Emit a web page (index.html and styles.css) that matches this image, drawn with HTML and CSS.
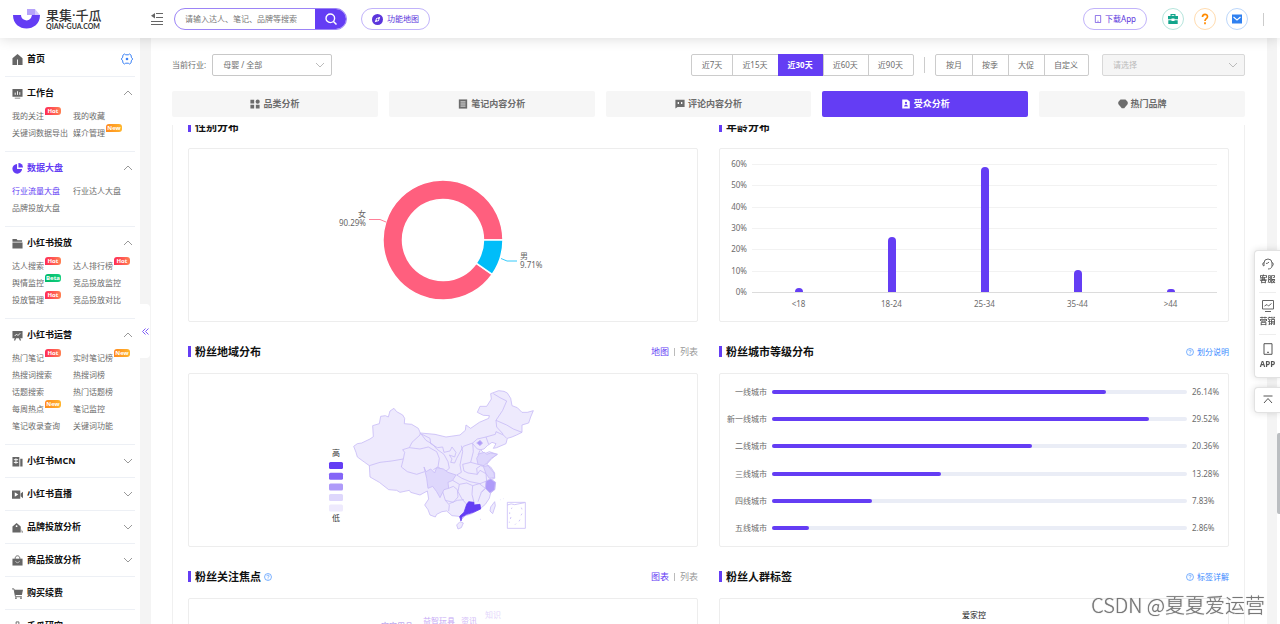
FILE: index.html
```html
<!DOCTYPE html>
<html lang="zh-CN">
<head>
<meta charset="utf-8">
<meta name="viewport" content="width=device-width, initial-scale=1">
<title>果集·千瓜</title>
<link rel="stylesheet" href="styles.css">
</head>
<body>
<svg class="sprite" aria-hidden="true">
  <symbol id="up" viewBox="0 0 10 10"><path d="M1 7l4-4 4 4" fill="none" stroke="currentColor"/></symbol>
  <symbol id="down" viewBox="0 0 10 10"><path d="M1 3l4 4 4-4" fill="none" stroke="currentColor"/></symbol>
  <symbol id="help" viewBox="0 0 12 12"><g fill="none" stroke="currentColor"><circle cx="6" cy="6" r="5.2"/><path d="M4.3 4.8C4.3 2.6 7.7 2.6 7.7 4.7 7.7 5.900 6 5.900 6 7.200M6 8.300v1.100"/></g></symbol>
  <symbol id="phone" viewBox="0 0 12 12"><path d="M2 .7h8v10.600h-8zM5 9.300h2" fill="none" stroke="currentColor"/></symbol>
</svg>

<header class="header">
  <a class="logo" href="#">
    <svg width="29" height="22" viewBox="0 0 29 22"><path d="M1 7h8a5.500 5.500 0 0 0 10 3l1-3h8C28 25 1 25 1 7z" fill="#643df4"/><path d="M15 1h8v6h-8z" fill="#b5a2fa"/><path d="M23 1l5 6h-5z" fill="#d3c8fc"/></svg>
    <span class="logo-text"><b class="logo-name">果集·千瓜</b><span class="logo-site">QIAN-GUA.COM</span></span>
  </a>
  <button class="fold" aria-label="收起菜单"><svg width="12" height="12" viewBox="0 0 12 12"><path d="M5 .5h7M5 4.500h7M0 8.500h12M0 11.500h12" stroke="#666" fill="none"/><path d="M4 0v5.500L0 2.700z" fill="#666"/></svg></button>
  <form class="search">
    <input class="search-input" aria-label="搜索" placeholder="请输入达人、笔记、品牌等搜索">
    <button class="search-btn" type="button" aria-label="搜索"><svg width="12" height="12" viewBox="0 0 12 12"><circle cx="5.300" cy="5.300" r="4.300" fill="none" stroke="#fff" stroke-width="1.400"/><path d="M8.500 8.500l3 3" stroke="#fff" stroke-width="1.500"/></svg></button>
  </form>
  <button class="pill map-btn"><svg width="11" height="11" viewBox="0 0 12 12"><circle cx="6" cy="6" r="6" fill="#5b35dc"/><path d="M9 3L7.500 7.500 3 9l1.500-4.500z" fill="#fff"/><circle cx="6" cy="6" r="1" fill="#5b35dc"/></svg>功能地图</button>
  <div class="header-right">
    <button class="pill app-btn"><svg width="8" height="8"><use href="#phone"/></svg>下载App</button>
    <button class="round green" aria-label="工具箱"><svg width="12" height="12" viewBox="0 0 12 12"><path d="M1 3h2.500V1h5v2H11v3.200H7.500V5.500h-3v.7H1zM1.300 7.200h3.200V8h3v-.8h3.200V11H1.300z" fill="#12a58c"/><path d="M4.700 2.200h2.600V3H4.700z" fill="#fff"/></svg></button>
    <button class="round orange" aria-label="帮助"><svg width="12" height="12" viewBox="0 0 12 12"><path d="M3.500 4C3.500.5 8.500.5 8.500 3.700 8.500 5.700 6 5.800 6 8M6 9.300v2" fill="none" stroke="#ff8a00" stroke-width="1.700"/></svg></button>
    <button class="round blue" aria-label="消息"><svg width="12" height="12" viewBox="0 0 12 12"><path d="M1 1.500h10v9H1z" fill="#2f80f0"/><path d="M2.500 4L6 7l3.500-3" fill="none" stroke="#fff" stroke-width="1.100"/></svg></button>
    <i class="header-line"></i>
  </div>
</header>

<div class="body">
  <nav class="sidebar">
    <section class="group home">
      <a class="head" href="#"><svg class="ico" viewBox="0 0 12 12"><path d="M6 0l5.500 4.500V12H.5V4.500z" fill="#666"/><path d="M6 6v6" stroke="#fff"/></svg>首页<svg class="gear" viewBox="0 0 12 12"><path d="M3.500 1l1.200.8h2.600L8.500 1l1.600 1.200.2 2L11.700 6l-1.400 1.800-.2 2L8.500 11l-1.200-.8H4.700L3.500 11 1.900 9.800l-.2-2L.3 6l1.400-1.800.2-2z" fill="none" stroke="#3b82f6"/><circle cx="6" cy="6" r="1.300" fill="#3b82f6"/></svg></a>
    </section>
    <section class="group">
      <a class="head" href="#"><svg class="ico" viewBox="0 0 12 12"><path d="M.5 1h11v8.500H.5zM3 10.500h6v1H3z" fill="#666"/><path d="M3.500 7.500V5M6 7.500v-4M8.500 7.500v-3" stroke="#fff"/></svg>工作台<svg class="arrow"><use href="#up"/></svg></a>
      <div class="subs"><a href="#">我的关注<em class="tag hot">Hot</em></a><a href="#">我的收藏</a><a href="#">关键词数据导出</a><a href="#">媒介管理<em class="tag new">New</em></a></div>
    </section>
    <section class="group active">
      <a class="head" href="#"><svg class="ico" viewBox="0 0 12 12"><path d="M5.500 1v5.500H11A5.300 5.300 0 1 1 5.500 1z" fill="#643df4"/><path d="M7 0a5 5 0 0 1 5 5H7z" fill="#643df4"/></svg>数据大盘<svg class="arrow"><use href="#up"/></svg></a>
      <div class="subs"><a class="current" href="#">行业流量大盘</a><a href="#">行业达人大盘</a><a href="#">品牌投放大盘</a></div>
    </section>
    <section class="group">
      <a class="head" href="#"><svg class="ico" viewBox="0 0 12 12"><path d="M.5 1H5l1 1.500h5V4H.5zM.5 5h11v6.500H.5z" fill="#666"/></svg>小红书投放<svg class="arrow"><use href="#up"/></svg></a>
      <div class="subs"><a href="#">达人搜索<em class="tag hot">Hot</em></a><a href="#">达人排行榜<em class="tag hot">Hot</em></a><a href="#">舆情监控<em class="tag beta">Beta</em></a><a href="#">竞品投放监控</a><a href="#">投放管理<em class="tag hot">Hot</em></a><a href="#">竞品投放对比</a></div>
    </section>
    <section class="group">
      <a class="head" href="#"><svg class="ico" viewBox="0 0 12 12"><path d="M.5 1h11v8H.5zM3 9h1.500L3.500 11.500H2zM7.500 9H9l1 2.500H8.500z" fill="#666"/><path d="M3 6.500l2-2 1.500 1.500L9 3.500" stroke="#fff" fill="none"/></svg>小红书运营<svg class="arrow"><use href="#up"/></svg></a>
      <div class="subs"><a href="#">热门笔记<em class="tag hot">Hot</em></a><a href="#">实时笔记榜<em class="tag new">New</em></a><a href="#">热搜词搜索</a><a href="#">热搜词榜</a><a href="#">话题搜索</a><a href="#">热门话题榜</a><a href="#">每周热点<em class="tag new">New</em></a><a href="#">笔记监控</a><a href="#">笔记收录查询</a><a href="#">关键词功能</a></div>
    </section>
    <section class="group"><a class="head" href="#"><svg class="ico" viewBox="0 0 12 12"><path d="M.5 1H8v10.500H.5zM9 3h2.500v8.500H9z" fill="#666"/><path d="M2 4h4.700M2 7h4.700M4.300 2.500v6" stroke="#fff"/></svg>小红书MCN<svg class="arrow"><use href="#down"/></svg></a></section>
    <section class="group"><a class="head" href="#"><svg class="ico" viewBox="0 0 12 12"><path d="M0 1.500h9v9H0zM9.500 5l2.500-2v7L9.500 8z" fill="#666"/><path d="M3 3.500L6.800 6 3 8.500z" fill="#fff"/></svg>小红书直播<svg class="arrow"><use href="#down"/></svg></a></section>
    <section class="group"><a class="head" href="#"><svg class="ico" viewBox="0 0 12 12"><path d="M.5 5L5 1l4.500 4v6.500h-9zM10.500 8l1.500 3.500h-1.500z" fill="#666"/><circle cx="5" cy="4.500" r="1" fill="#fff"/></svg>品牌投放分析<svg class="arrow"><use href="#down"/></svg></a></section>
    <section class="group"><a class="head" href="#"><svg class="ico" viewBox="0 0 12 12"><path d="M.5 4h11v7.500H.5z" fill="#666"/><path d="M3.500 5V3.500C3.500 0 8.500 0 8.500 3.500V5" fill="none" stroke="#666"/><path d="M4 6.500C4 9 8 9 8 6.500" fill="none" stroke="#fff" stroke-width=".6"/></svg>商品投放分析<svg class="arrow"><use href="#down"/></svg></a></section>
    <section class="group"><a class="head" href="#"><svg class="ico" viewBox="0 0 12 12"><path d="M2.500 2H12l-1.200 5.500H3.500z" fill="#666"/><path d="M0 1h2.200l1.600 8.500h7" fill="none" stroke="#666"/><circle cx="4.300" cy="11" r="1" fill="#666"/><circle cx="9.800" cy="11" r="1" fill="#666"/></svg>购买续费</a></section>
    <section class="group"><a class="head" href="#"><svg class="ico" viewBox="0 0 12 12"><path d="M4.500 1h3v4l3 6h-9l3-6z" fill="none" stroke="#666"/></svg>千瓜研究</a></section>
  </nav>
  <div class="gutter"><button class="collapse" aria-label="收起侧栏"><svg width="7" height="7" viewBox="0 0 7 7"><path d="M3.500.5l-3 3 3 3M6.500.5l-3 3 3 3" fill="none" stroke="#7d5cf6"/></svg></button></div>

  <main class="main">
    <div class="toolbar">
      <label class="label" for="industry">当前行业:</label>
      <span class="select industry"><select id="industry"><option>母婴 / 全部</option></select><svg class="arrow"><use href="#down"/></svg></span>
      <div class="btns push"><button>近7天</button><button>近15天</button><button class="on">近30天</button><button>近60天</button><button>近90天</button></div>
      <i class="split"></i>
      <div class="btns"><button>按月</button><button>按季</button><button>大促</button><button>自定义</button></div>
      <span class="select period"><select aria-label="周期" disabled><option>请选择</option></select><svg class="arrow"><use href="#down"/></svg></span>
    </div>
    <div class="tabs">
      <button class="tab"><svg viewBox="0 0 12 12"><path d="M.5 1H5v4.500H.5zM.5 7H5v4.500H.5zM7 7h4.500v4.500H7z" fill="currentColor"/><circle cx="9.200" cy="3.200" r="2.500" fill="currentColor"/></svg>品类分析</button>
      <button class="tab"><svg viewBox="0 0 12 12"><path d="M1 .5h10v11H1z" fill="currentColor"/><path d="M3 3.500h6M3 6h6M3 8.500h6" stroke="#fff"/></svg>笔记内容分析</button>
      <button class="tab"><svg viewBox="0 0 12 12"><path d="M.5 1h11v8.500H3L.5 11.500z" fill="currentColor"/><path d="M4 3.500v2.500M8 3.500v2.500" stroke="#fff" stroke-width="1.500"/></svg>评论内容分析</button>
      <button class="tab on"><svg viewBox="0 0 12 12"><path d="M1.500.5h6L10.500 3v8.500h-9z" fill="currentColor"/><circle cx="6" cy="4.700" r="1.300" fill="#643df4"/><path d="M3.700 9C3.700 6 8.300 6 8.300 9z" fill="#643df4"/></svg>受众分析</button>
      <button class="tab"><svg viewBox="0 0 12 12"><path d="M3 .5h6L11.700 3.500v2.500L7.500 11h-3L.3 6V3.500z" fill="currentColor"/></svg>热门品牌</button>
    </div>

    <div class="viewport">
      <div class="panels">
        <section class="panel">
          <div class="panel-head"><h2>性别分布</h2></div>
          <div class="card center">
            <svg width="246" height="172" viewBox="0 0 246 172">
              <g stroke="#fff" stroke-width="1.500"><path d="M183 91A60 60 0 1 0 172.200 125.400L156.200 114.200A40.500 40.500 0 1 1 163.500 91z" fill="#ff5f7e"/><path d="M183 91A60 60 0 0 1 172.200 125.400L156.200 114.200A40.500 40.500 0 0 0 163.500 91z" fill="#00bdf9"/></g>
              <path d="M49 70.500h11l6 2.500" fill="none" stroke="#ff5f7e" stroke-width=".8"/><path d="M181 109.500l6 2.500h10" fill="none" stroke="#00bdf9" stroke-width=".8"/>
              <g class="axis"><text x="46" y="68" text-anchor="end">女</text><text x="46" y="77" text-anchor="end">90.29%</text><text x="200" y="110">男</text><text x="200" y="119">9.71%</text></g>
            </svg>
          </div>
        </section>
        <section class="panel">
          <div class="panel-head"><h2>年龄分布</h2></div>
          <div class="card age">
            <div class="y-axis"><span>60%</span><span>50%</span><span>40%</span><span>30%</span><span>20%</span><span>10%</span><span>0%</span></div>
            <div class="plot">
              <div class="grid"><i></i><i></i><i></i><i></i><i></i><i></i></div>
              <div class="bars"><i style="height:3%"></i><i style="height:43%"></i><i style="height:98%"></i><i style="height:17%"></i><i style="height:2%"></i></div>
              <div class="x-axis"><span>&lt;18</span><span>18-24</span><span>25-34</span><span>35-44</span><span>&gt;44</span></div>
            </div>
          </div>
        </section>
        <section class="panel">
          <div class="panel-head"><h2>粉丝地域分布</h2><div class="switch"><a class="on" href="#">地图</a><i></i><a href="#">列表</a></div></div>
          <div class="card center">
            <svg width="246" height="172" viewBox="0 0 246 172">
              <g class="axis dark"><text x="12" y="82">高</text><text x="12" y="147">低</text></g>
              <rect x="9" y="88" width="14" height="7" rx="1.500" fill="#643df4"/><rect x="9" y="98.700" width="14" height="7" rx="1.500" fill="#8465f7"/><rect x="9" y="109.400" width="14" height="7" rx="1.500" fill="#af9bf9"/><rect x="9" y="120" width="14" height="7" rx="1.500" fill="#ded7fc"/><rect x="9" y="130.600" width="14" height="7" rx="1.500" fill="#eeeafd"/>
              <g transform="translate(0 1) scale(.33333)" stroke="#c6baf6" stroke-width="2.400" stroke-linejoin="round" fill="none">
                <path fill="#eeeafd" d="M101 214L112 206 125 204 150 192 160 185 158 152 178 146 182 124 196 122 205 126 210 108 222 100 230 110 248 120 254 130 253 146 275 148 295 160 301 174 345 178 378 186 420 180 436 166 438 150 452 160 478 142 506 130 508 122 490 121 472 112 480 94 500 94 514 72 512 56 536 47 552 49 562 54 572 70 576 92 592 98 606 112 622 112 640 107 632 126 626 144 606 150 606 172 590 180 576 186 562 190 558 206 530 218 520 220 528 206 516 202 502 212 492 222 482 224 494 236 508 230 532 238 516 250 500 268 512 276 524 294 524 310 514 314 527 322 524 344 512 354 508 370 496 388 482 400 455 416 436 422 424 434 416 424 396 422 380 408 366 410 350 418 346 426 330 420 324 404 314 390 326 372 322 348 300 360 272 352 268 346 240 352 230 346 206 344 178 322 150 306 148 272 134 262 112 246 108 232z"/>
                <path d="M148 272L180 262 215 258 250 252 254 232 248 224 268 218 276 202 300 180 301 174M268 218L300 222 325 216 350 230 358 250 354 276 340 284M250 252L244 276 262 290 290 298 314 290M301 174L318 196 338 208 350 222 372 238 384 260 388 280 376 290 354 276M306 178L330 190 332 206 352 218 368 216 372 232 390 228 396 216 408 232 404 246 388 240 396 252 392 262 404 264 410 250 430 214 458 204 460 230 452 262 428 268M424 212L428 230 420 270 424 292 410 300M458 204L472 192 498 186 526 178 528 170 550 180 560 190M498 186L506 208M458 206L472 222 482 224M528 136L530 156 550 178M528 136L560 150 580 162 606 172M528 136L548 106 560 78 540 68 520 56M452 262L474 268M428 268L432 288 444 294 472 298 470 280 482 272 490 274M410 300L426 310 450 320 480 326 500 318 498 296 480 286 472 298M418 328L440 324 458 332 456 358 462 382M418 328L414 350 426 372 440 388M458 332L478 326 496 340 484 352 474 380M386 340L400 334 412 344 414 366 400 382 376 376 368 350M376 376L388 390 386 408M388 386L412 376 432 374M398 316L418 328M484 352L496 340 510 354M480 226L474 240"/>
                <path fill="#ded7fc" d="M312 276L318 290 332 282 344 294 350 278 370 282 384 292 408 300 398 316 384 322 386 340 372 344 360 368 350 350 338 334 324 340 320 310zM470 250L478 236 494 232 500 238 512 234 532 238 514 250 500 264 492 272 474 268zM490 274L504 272 522 294 524 308 508 310 498 296z"/>
                <path fill="#af9bf9" d="M498 318L512 312 526 322 524 344 510 354 496 340zM470 204L480 196 488 204 480 212z"/>
                <path fill="#643df4" stroke="#643df4" d="M440 388L446 380 462 382 462 390 480 388 482 402 460 412 440 418 426 426 423 438 419 424 432 412z"/>
                <path fill="#eeeafd" d="M410 450L420 440 430 444 424 458 414 462zM512 396L524 380 526 392 518 416 510 408z"/>
                <path d="M562 382h54v78h-54zM562 390q12-6 22-1l30-6M576 398l-2 4M604 398l2 5M569 412v5M606 416l-3 5M573 426l-2 6M600 434l-3 5M568 440v3M588 446l-3 3M540 374h1M550 371h1M480 433h2"/>
              </g>
            </svg>
          </div>
        </section>
        <section class="panel">
          <div class="panel-head"><h2>粉丝城市等级分布</h2><a class="more" href="#"><svg><use href="#help"/></svg>划分说明</a></div>
          <div class="card city">
            <div class="row"><span>一线城市</span><i class="track"><i style="width:80.5%"></i></i><b>26.14%</b></div>
            <div class="row"><span>新一线城市</span><i class="track"><i style="width:90.8%"></i></i><b>29.52%</b></div>
            <div class="row"><span>二线城市</span><i class="track"><i style="width:62.6%"></i></i><b>20.36%</b></div>
            <div class="row"><span>三线城市</span><i class="track"><i style="width:40.8%"></i></i><b>13.28%</b></div>
            <div class="row"><span>四线城市</span><i class="track"><i style="width:24%"></i></i><b>7.83%</b></div>
            <div class="row"><span>五线城市</span><i class="track"><i style="width:8.8%"></i></i><b>2.86%</b></div>
          </div>
        </section>
        <section class="panel">
          <div class="panel-head"><h2>粉丝关注焦点</h2><svg class="tip"><use href="#help"/></svg><div class="switch"><a class="on" href="#">图表</a><i></i><a href="#">列表</a></div></div>
          <div class="card center">
            <svg width="246" height="172" viewBox="0 0 246 172"><g class="cloud"><text x="165" y="19" fill="#e3d6fc">知识</text><text x="141" y="25" fill="#d2bcf8">资讯</text><text x="103" y="25" fill="#c5a8f5">益智玩具</text><text x="61" y="30" fill="#a98be8">宝宝用品</text></g></svg>
          </div>
        </section>
        <section class="panel">
          <div class="panel-head"><h2>粉丝人群标签</h2><a class="more" href="#"><svg><use href="#help"/></svg>标签详解</a></div>
          <div class="card labels"><span>爱家控</span></div>
        </section>
      </div>
    </div>
  </main>
  <div class="gutter right"></div>
  <div class="scroll"><i></i></div>
</div>

<aside class="float">
  <div class="float-box">
    <a href="#"><svg width="12" height="12" viewBox="0 0 12 12"><path d="M2 8V5a4 4 0 0 1 8 0v3c0 2-2 3-4 3M2 4.500C.3 4.500.3 8 2 8M10 4.500c1.700 0 1.700 3.500 0 3.500M4 5.500q2 0 3-1.500" fill="none" stroke="#666"/></svg>客服</a>
    <a href="#"><svg width="12" height="12" viewBox="0 0 12 12"><path d="M.5 .5h11v8.500H.5zM3 11.500h6M2.500 6L5 4.500 6.500 6l3-2.500" fill="none" stroke="#666"/></svg>营销</a>
    <a href="#"><svg width="12" height="12"><use href="#phone"/></svg>APP</a>
  </div>
  <button class="float-box top" aria-label="返回顶部"><svg width="10" height="10" viewBox="0 0 10 10"><path d="M.5 1h9M1 8l4-4.500L9 8" fill="none" stroke="#555"/></svg></button>
</aside>
<div class="watermark">CSDN @夏夏爱运营</div>
</body>
</html>
```

FILE: styles.css
```css
* { box-sizing: border-box; }
body {
  margin: 0;
  height: 100vh;
  overflow: hidden;
  display: flex;
  flex-direction: column;
  background: #fff;
  color: #6c6c6c;
  font: 8px/12px "Noto Sans", "Noto Sans CJK SC", sans-serif;
}
button, input, select { font: inherit; color: inherit; margin: 0; padding: 0; border: 0; background: none; }
button { cursor: pointer; }
a { color: inherit; text-decoration: none; }
i, em { font-style: normal; }
svg { flex: none; }
.sprite { position: absolute; width: 0; height: 0; }

.header {
  flex: none;
  height: 38px;
  display: flex;
  align-items: center;
  padding: 0 16px 0 12px;
  background: #fff;
  box-shadow: 0 0 14px rgba(0, 0, 0, .16);
  z-index: 2;
}
.logo { width: 139px; display: flex; align-items: center; gap: 5px; }
.logo-text { display: flex; flex-direction: column; color: #333; }
.logo-name { font-size: 13px; line-height: 13px; font-weight: 500; }
.logo-site { font: bold 7px/8px Lato, sans-serif; }
.fold { display: flex; margin-right: 11px; }
.search { display: flex; width: 173px; height: 22px; border: 1px solid #9c84f6; border-radius: 11px; overflow: hidden; }
.search-input { flex: 1; min-width: 0; padding-left: 10px; outline: 0; }
.search-input::placeholder { color: #777; }
.search-btn { width: 31px; display: flex; align-items: center; justify-content: center; background: #643df4; }
.pill { height: 22px; display: flex; align-items: center; border: 1px solid #c1b3fa; border-radius: 11px; color: #5b35dc; background: #fff; }
.map-btn { margin-left: 14px; padding: 0 10px; gap: 4px; }
.app-btn { padding: 0 10px; gap: 3px; margin-right: 5px; }
.header-right { margin-left: auto; display: flex; align-items: center; gap: 10px; }
.round { width: 22px; height: 22px; display: flex; align-items: center; justify-content: center; border: 1px solid; border-radius: 50%; }
.green { border-color: #b6e5dc; }
.orange { border-color: #ffdcb0; }
.blue { border-color: #bcd7fb; }
.header-line { width: 1px; height: 13px; margin-left: 5px; background: #ccc; }

.body { flex: 1; min-height: 0; display: flex; }
.sidebar { flex: none; width: 140px; padding: 0 5px; overflow: hidden; }
.group { border-bottom: 1px solid #edf0f5; padding: 0 2px 0 7px; }
.home { padding-top: 5px; padding-bottom: 1px; }
.head { height: 32px; display: flex; align-items: center; gap: 4px; color: #111; font-size: 9px; font-weight: 700; }
.ico { width: 11px; height: 11px; }
.arrow { width: 10px; height: 10px; margin-left: auto; color: #999; }
.gear { width: 12px; height: 12px; margin-left: auto; }
.active .head, .current { color: #643df4; }
.subs { display: grid; grid-template-columns: 61px 1fr; grid-auto-rows: 17px; margin-top: -2px; padding-bottom: 10px; white-space: nowrap; }
.subs a { justify-self: start; position: relative; line-height: 17px; }
.tag { position: absolute; left: 100%; top: 0; width: 16px; height: 8px; margin-left: 1px; border-radius: 3px 3px 3px 0; color: #fff; font-size: 6px; line-height: 8px; font-weight: 700; text-align: center; }
.hot { background: linear-gradient(90deg, #ff2d55, #ff8052); }
.new { background: linear-gradient(90deg, #ff8a1e, #ffb52e); }
.beta { background: linear-gradient(90deg, #04b968, #12cf80); }

.gutter { flex: none; width: 11px; display: flex; align-items: center; background: #f4f4f4; }
.gutter.right { width: 10px; }
.collapse { width: 10px; height: 54px; display: flex; align-items: center; justify-content: center; background: #fff; border-radius: 0 4px 4px 0; }
.scroll { flex: none; width: 3px; display: flex; flex-direction: column; justify-content: end; padding-bottom: 110px; }
.scroll i { height: 81px; background: #bbbec1; border-radius: 2px 0 0 2px; }

.main { flex: 1; min-width: 0; display: flex; flex-direction: column; padding: 16px 22px 0 21px; }
.toolbar { display: flex; align-items: center; height: 22px; margin-bottom: 15px; }
.label { margin-right: 6px; }
.select { position: relative; height: 22px; }
.select select { width: 100%; height: 22px; padding: 0 10px; appearance: none; border: 1px solid #c8c8c8; border-radius: 2px; }
.select select:disabled { background: #f5f5f5; color: #bbb; border-color: #d8d8d8; opacity: 1; }
.select .arrow { position: absolute; right: 7px; top: 6px; color: #bbb; }
.industry { width: 120px; }
.period { width: 143px; margin-left: 13px; }
.btns { display: flex; height: 22px; border: 1px solid #ccc; border-radius: 2px; }
.push { margin-left: auto; }
.btns button { padding: 0 10px 0 9px; border-left: 1px solid #ccc; }
.btns button:first-child { padding-left: 10px; border-left: 0; }
.btns .on { margin: -1px 0; padding: 0 10px; border: 0; background: #643df4; color: #fff; font-weight: 700; }
.split { width: 1px; height: 16px; margin: 0 10px; background: #ccc; }
.tabs { display: grid; grid-template-columns: repeat(5, 1fr); gap: 11px; margin-bottom: 8px; }
.tab { height: 26px; display: flex; align-items: center; justify-content: center; gap: 3px; border-radius: 2px; background: #f6f6f6; font-size: 9px; font-weight: 700; }
.tab svg { width: 10px; height: 10px; }
.tab.on { background: #643df4; color: #fff; }

.viewport { flex: 1; min-height: 0; overflow: hidden; padding: 0 15px; border: solid #f0f0f0; border-width: 0 1px; }
.panels { display: grid; grid-template-columns: 1fr 1fr; column-gap: 21px; margin-top: -28px; }
.panel { min-width: 0; }
.panel-head { height: 51px; padding-top: 8px; display: flex; align-items: center; }
.panel h2 { margin: 0; display: flex; align-items: center; gap: 4px; color: #111; font-size: 11px; line-height: 16px; font-weight: 700; }
.panel h2::before { content: ""; width: 3px; height: 11px; background: #643df4; }
.tip { width: 8px; height: 8px; margin-left: 3px; color: #3b8bff; }
.switch { margin-left: auto; display: flex; align-items: center; gap: 5px; font-size: 9px; color: #999; }
.switch i { width: 1px; height: 8px; background: #bbb; }
.switch .on { color: #643df4; }
.more { margin-left: auto; display: flex; align-items: center; gap: 3px; color: #3b8bff; }
.more svg { width: 8px; height: 8px; }
.card { height: 174px; border: 1px solid #ededed; border-radius: 2px; }
.center { display: flex; justify-content: center; overflow: hidden; }
.axis { font-size: 8px; fill: #666; }
.dark { fill: #333; }
.cloud { font-size: 8px; }

.age { display: flex; padding: 15px 11px 0 10px; }
.y-axis { width: 17px; height: 128px; display: flex; flex-direction: column; justify-content: space-between; text-align: right; margin-right: 5px; }
.y-axis span { height: 0; line-height: 0; }
.plot { flex: 1; position: relative; }
.grid { height: 129px; display: flex; flex-direction: column; border-bottom: 1px solid #dcdcdc; }
.grid i { flex: 1; border-top: 1px solid #f2f2f2; }
.bars { position: absolute; left: 0; right: 0; top: 0; height: 128px; display: flex; justify-content: space-around; align-items: flex-end; }
.bars i { width: 8px; border-radius: 4px 4px 0 0; background: #643df4; }
.x-axis { display: grid; grid-template-columns: repeat(5, 1fr); text-align: center; padding-top: 5px; }

.city { display: flex; flex-direction: column; padding: 4px 8px 4px 5px; }
.row { flex: 1; display: flex; align-items: center; }
.row span { width: 42px; text-align: right; }
.row b { width: 28px; font-weight: 400; }
.track { flex: 1; height: 4px; margin: 0 5px; border-radius: 2px; background: #eaedf6; }
.track i { display: block; height: 4px; border-radius: 2px; background: #643df4; }
.labels { padding-top: 10px; text-align: center; color: #222; }

.float { position: fixed; right: 0; top: 250px; width: 26px; z-index: 3; }
.float-box { width: 26px; display: block; background: #fff; border: 1px solid #e2e2e2; border-right: 0; border-radius: 4px 0 0 4px; box-shadow: 0 0 7px rgba(0, 0, 0, .14); }
.float-box a { height: 42px; margin: 0 4px; display: flex; flex-direction: column; align-items: center; justify-content: center; gap: 3px; border-bottom: 1px solid #eee; color: #555; font-weight: 700; white-space: nowrap; }
.float-box a:last-child { border: 0; }
.top { height: 26px; margin-top: 9px; display: flex; align-items: center; justify-content: center; }
.watermark { position: fixed; right: 15px; bottom: 7px; z-index: 4; color: #777; font: 300 20px/24px "Noto Sans CJK SC", sans-serif; text-shadow: 0 0 1px #999; }
```
